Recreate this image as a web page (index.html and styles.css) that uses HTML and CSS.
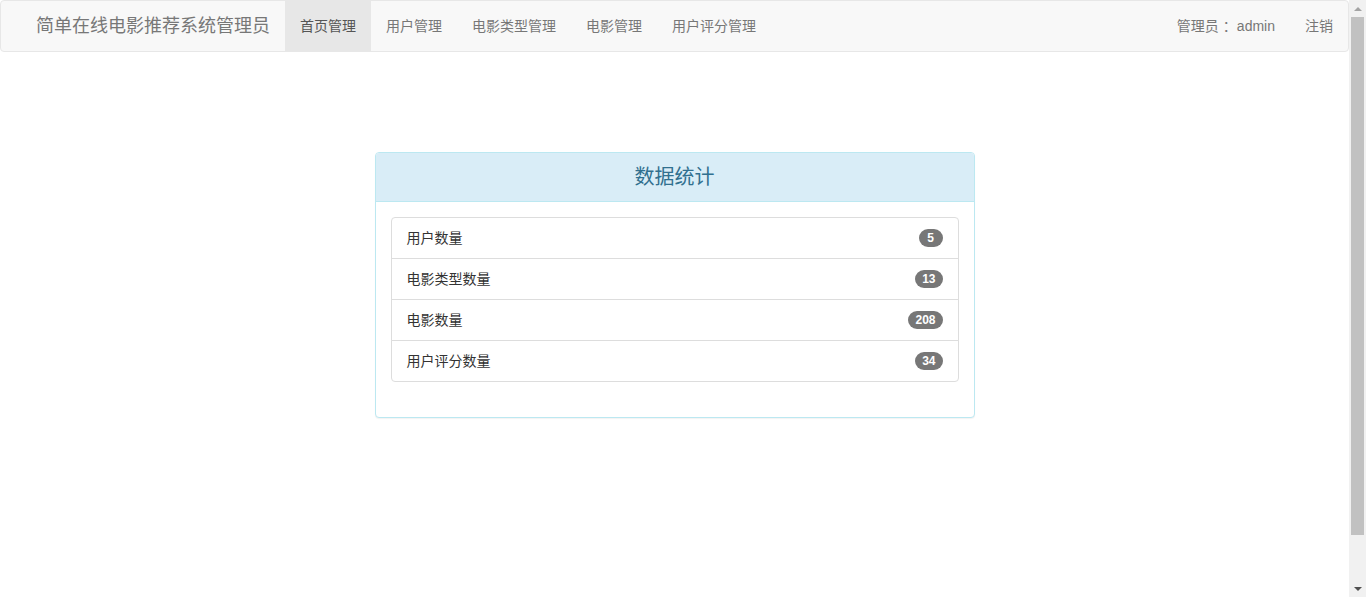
FILE: index.html
```html
<!DOCTYPE html>
<html lang="zh-CN">
<head>
<meta charset="utf-8">
<title>简单在线电影推荐系统管理员</title>
<link rel="stylesheet" href="styles.css">
</head>
<body>
<div class="page">
  <div class="main">
    <nav class="navbar">
      <div class="nav-left">
        <a class="brand" href="#">简单在线电影推荐系统管理员</a>
        <ul class="nav">
          <li class="active"><a href="#">首页管理</a></li>
          <li><a href="#">用户管理</a></li>
          <li><a href="#">电影类型管理</a></li>
          <li><a href="#">电影管理</a></li>
          <li><a href="#">用户评分管理</a></li>
        </ul>
      </div>
      <ul class="nav">
        <li><a href="#">管理员<span class="colon">：</span>admin</a></li>
        <li><a href="#">注销</a></li>
      </ul>
    </nav>
    <div class="content">
      <div class="panel">
        <div class="panel-heading">数据统计</div>
        <div class="panel-body">
          <ul class="list-group">
            <li class="list-item"><span>用户数量</span><span class="badge">5</span></li>
            <li class="list-item"><span>电影类型数量</span><span class="badge">13</span></li>
            <li class="list-item"><span>电影数量</span><span class="badge">208</span></li>
            <li class="list-item"><span>用户评分数量</span><span class="badge">34</span></li>
          </ul>
        </div>
      </div>
    </div>
  </div>
  <div class="scrollbar">
    <div class="arrow up"></div>
    <div class="track"><div class="thumb"></div></div>
    <div class="arrow down"></div>
  </div>
</div>
</body>
</html>
```
FILE: styles.css
```css
html, body {
  margin: 0;
  padding: 0;
  height: 100%;
  overflow: hidden;
}
body {
  font-family: "Liberation Sans", "Noto Sans CJK SC", sans-serif;
  font-size: 14px;
  line-height: 20px;
  color: #333;
  background: #fff;
}
a { text-decoration: none; }
ul { list-style: none; margin: 0; padding: 0; }

.page {
  display: flex;
  height: 597px;
}
.main {
  flex: 1;
  min-width: 0;
}

.navbar {
  display: flex;
  justify-content: space-between;
  height: 50px;
  background: #f8f8f8;
  border: 1px solid #e7e7e7;
  border-radius: 4px;
  padding: 0 0 0 20px;
}
.nav-left { display: flex; }
.brand {
  font-size: 18px;
  line-height: 20px;
  padding: 15px 15px;
  color: #777;
  height: 20px;
}
.nav { display: flex; }
.nav li a {
  display: block;
  padding: 15px 15px;
  line-height: 20px;
  color: #777;
}
.nav li.active a {
  background: #e7e7e7;
  color: #555;
}
.colon { padding-left: 4px; }

.content {
  display: flex;
  justify-content: center;
  padding-top: 100px;
}
.panel {
  width: 598px;
  border: 1px solid #bce8f1;
  border-radius: 4px;
  background: #fff;
  box-shadow: 0 1px 1px rgba(0,0,0,.05);
}
.panel-heading {
  background: #d9edf7;
  color: #31708f;
  border-bottom: 1px solid #bce8f1;
  border-radius: 3px 3px 0 0;
  text-align: center;
  font-size: 20px;
  line-height: 26px;
  padding: 11px 15px;
  height: 26px;
}
.panel-body {
  padding: 15px;
}
.list-group {
  margin-bottom: 20px;
}
.list-item {
  display: flex;
  justify-content: space-between;
  align-items: center;
  padding: 10px 15px;
  border: 1px solid #ddd;
  margin-bottom: -1px;
  background: #fff;
  color: #333;
}
.list-item:first-child { border-radius: 4px 4px 0 0; }
.list-item:last-child { border-radius: 0 0 4px 4px; margin-bottom: 0; }
.badge {
  display: inline-block;
  min-width: 10px;
  padding: 3px 7px;
  font-size: 12px;
  font-weight: bold;
  line-height: 12px;
  color: #fff;
  text-align: center;
  background: #777;
  border-radius: 10px;
}

.scrollbar {
  width: 17px;
  background: #f1f1f1;
  display: flex;
  flex-direction: column;
}
.arrow {
  height: 17px;
  display: flex;
  align-items: center;
  justify-content: center;
}
.arrow.up::before {
  content: "";
  border-left: 4px solid transparent;
  border-right: 4px solid transparent;
  border-bottom: 4px solid #a3a3a3;
}
.arrow.down::before {
  content: "";
  border-left: 4px solid transparent;
  border-right: 4px solid transparent;
  border-top: 4px solid #505050;
}
.track {
  flex: 1;
  padding: 0 2px;
}
.thumb {
  height: 518px;
  background: #c1c1c1;
}
```
